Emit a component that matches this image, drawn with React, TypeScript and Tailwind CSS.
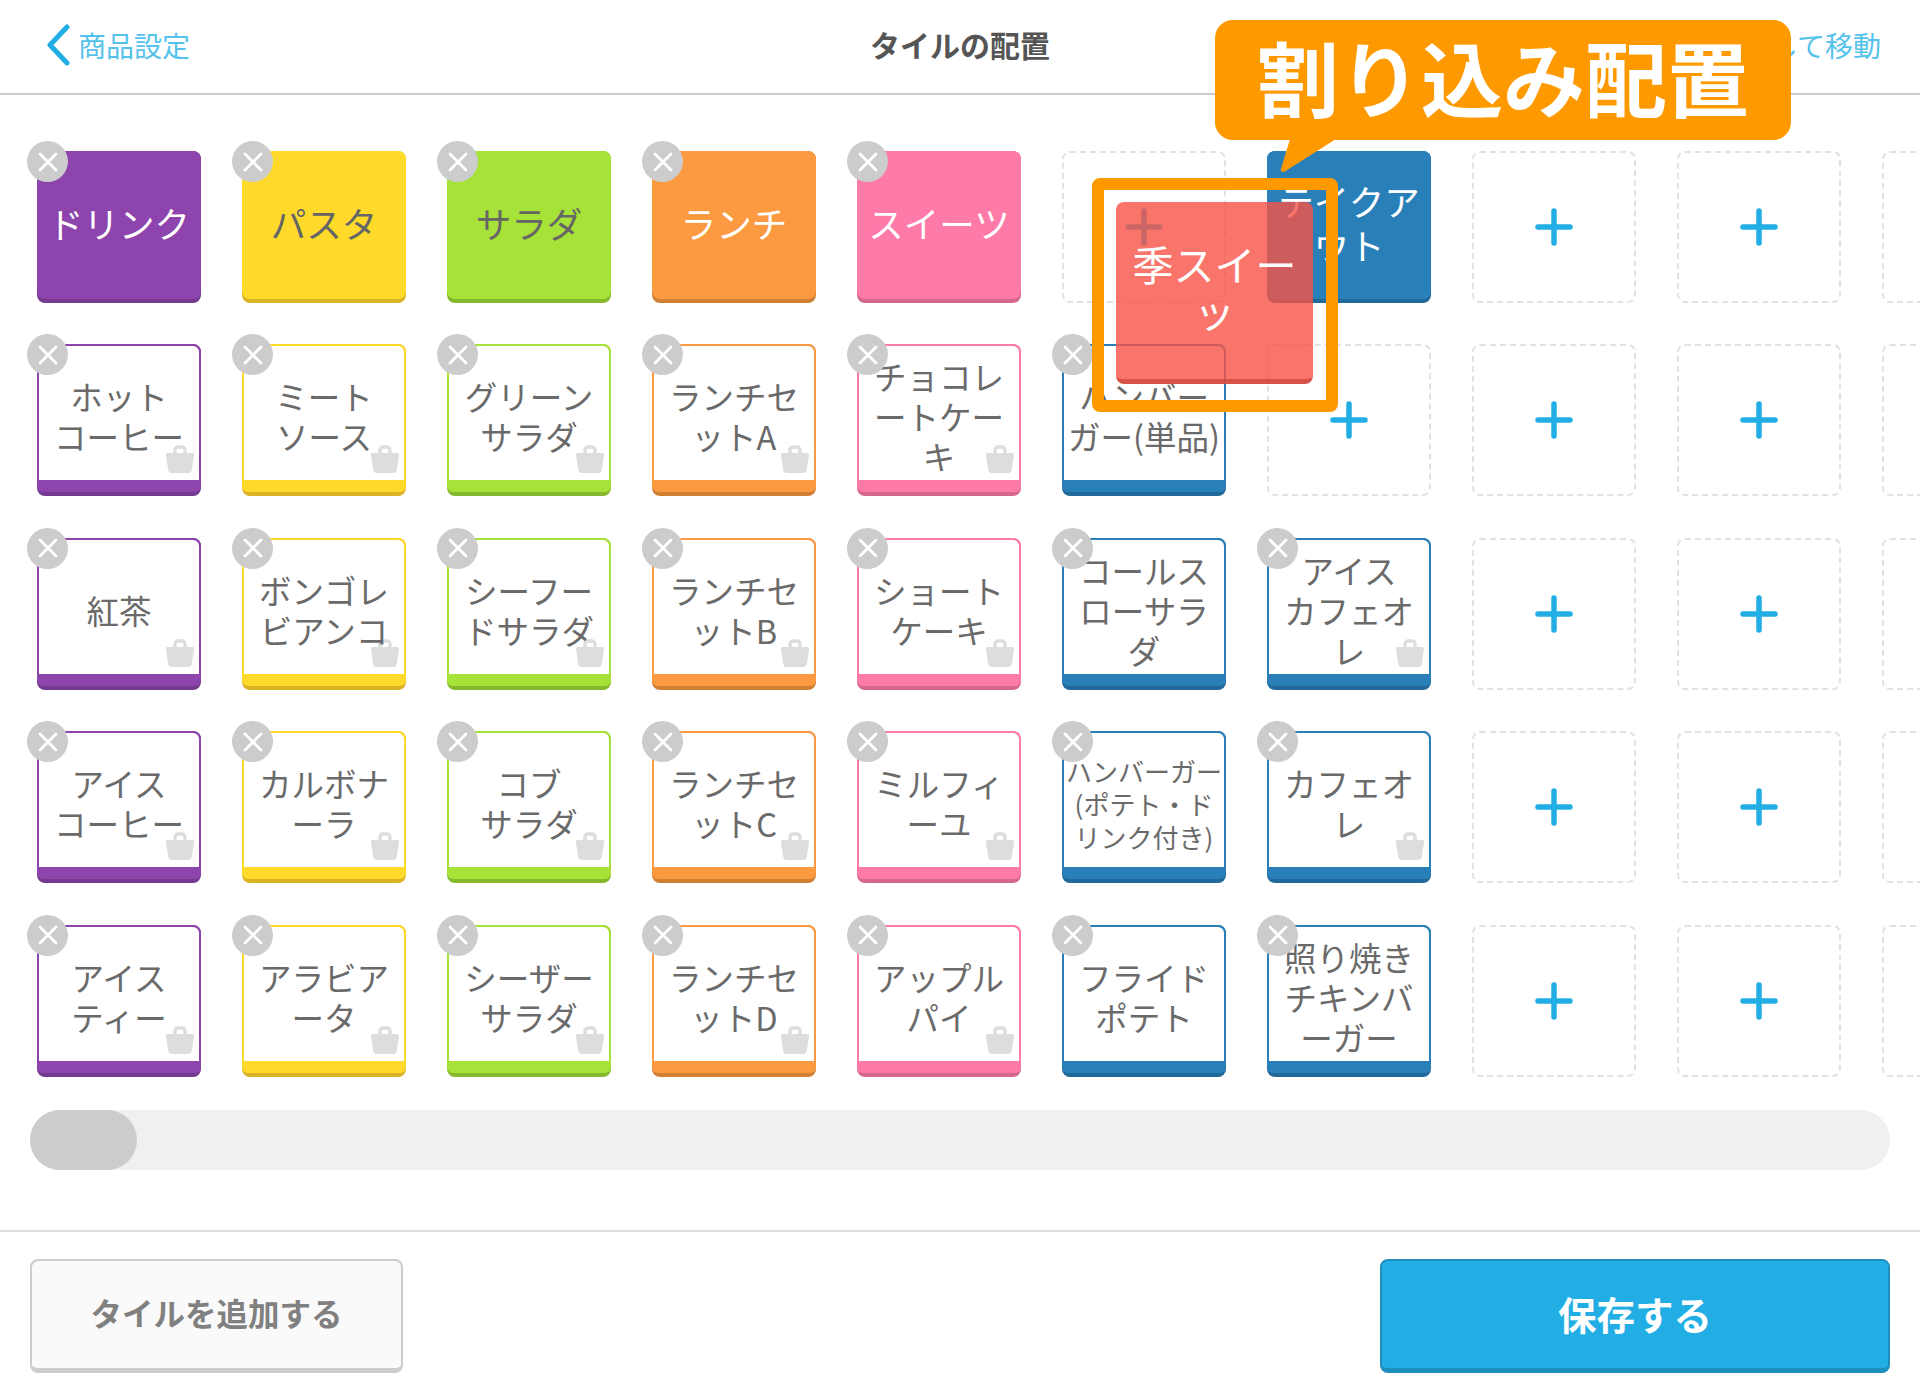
import React from "react";

const FONT = { fontFamily: '"Noto Sans CJK JP", "Noto Sans", sans-serif' };

const PALETTE = {
  purple: { bg: "bg-[#8e44ad]", dark: "bg-[#733a8f]", border: "border-[#8e44ad]", label: "text-white" },
  yellow: { bg: "bg-[#ffda2b]", dark: "bg-[#d9b324]", border: "border-[#ffda2b]", label: "text-[#666666]" },
  green: { bg: "bg-[#a6e237]", dark: "bg-[#85b82d]", border: "border-[#a6e237]", label: "text-[#666666]" },
  orange: { bg: "bg-[#fb9a40]", dark: "bg-[#d17f33]", border: "border-[#fb9a40]", label: "text-white" },
  pink: { bg: "bg-[#fe7aa8]", dark: "bg-[#d5668c]", border: "border-[#fe7aa8]", label: "text-white" },
  blue: { bg: "bg-[#2980b9]", dark: "bg-[#21699a]", border: "border-[#2980b9]", label: "text-white" },
};

type ColorName = keyof typeof PALETTE;

interface TileData {
  lines: string[];
  color: ColorName;
  solid?: boolean;
  noClose?: boolean;
  noBag?: boolean;
  small?: boolean;
}

const item = (color: ColorName, text: string, noBag = false, small = false): TileData => ({
  lines: text.split("/"),
  color,
  noBag,
  small,
});

const cat = (color: ColorName, text: string, noClose = false): TileData => ({
  lines: text.split("/"),
  color,
  solid: true,
  noClose,
});

const ROWS: (TileData | null)[][] = [
  [cat("purple", "ドリンク"), cat("yellow", "パスタ"), cat("green", "サラダ"), cat("orange", "ランチ"), cat("pink", "スイーツ"), null, cat("blue", "テイクア/ウト", true), null, null, null],
  [item("purple", "ホット/コーヒー"), item("yellow", "ミート/ソース"), item("green", "グリーン/サラダ"), item("orange", "ランチセ/ットA"), item("pink", "チョコレ/ートケー/キ"), item("blue", "ハンバー/ガー(単品)", true), null, null, null, null],
  [item("purple", "紅茶"), item("yellow", "ボンゴレ/ビアンコ"), item("green", "シーフー/ドサラダ"), item("orange", "ランチセ/ットB"), item("pink", "ショート/ケーキ"), item("blue", "コールス/ローサラ/ダ", true), item("blue", "アイス/カフェオ/レ"), null, null, null],
  [item("purple", "アイス/コーヒー"), item("yellow", "カルボナ/ーラ"), item("green", "コブ/サラダ"), item("orange", "ランチセ/ットC"), item("pink", "ミルフィ/ーユ"), item("blue", "ハンバーガー/(ポテト・ド/リンク付き)", true, true), item("blue", "カフェオ/レ"), null, null, null],
  [item("purple", "アイス/ティー"), item("yellow", "アラビア/ータ"), item("green", "シーザー/サラダ"), item("orange", "ランチセ/ットD"), item("pink", "アップル/パイ"), item("blue", "フライド/ポテト", true), item("blue", "照り焼き/チキンバ/ーガー", true), null, null, null],
];

function CloseBadge() {
  return (
    <div className="absolute -left-[10px] -top-[10px] z-10 flex h-[41px] w-[41px] items-center justify-center rounded-full bg-[#cccccc]">
      <svg width="20" height="20" viewBox="0 0 20 20" fill="none" stroke="white" strokeWidth="2.8" strokeLinecap="round">
        <path d="M2 2 18 18M18 2 2 18" />
      </svg>
    </div>
  );
}

function BagIcon() {
  return (
    <svg className="absolute bottom-[7px] right-[5px]" width="28" height="28" viewBox="0 0 28 28" fill="none">
      <path d="M9 10V5a3 3 0 0 1 3-3h4a3 3 0 0 1 3 3v5" stroke="#dddddd" strokeWidth="3.4" />
      <path
        d="M2 8h24a2 2 0 0 1 2 2.4l-2.2 14.4A3.5 3.5 0 0 1 22.4 28H5.6a3.5 3.5 0 0 1-3.4-3.2L0 10.4A2 2 0 0 1 2 8Z"
        fill="#dddddd"
      />
    </svg>
  );
}

function PlusIcon({ color = "#22aee4" }: { color?: string }) {
  return (
    <svg width="38" height="38" viewBox="0 0 38 38" fill="none" stroke={color} strokeWidth="5.5" strokeLinecap="round">
      <path d="M19 3V35M3 19H35" />
    </svg>
  );
}

function EmptySlot() {
  return (
    <div className="flex h-[152px] items-center justify-center rounded-lg border-2 border-dashed border-[#e2e2e2]">
      <PlusIcon />
    </div>
  );
}

function Tile({ tile }: { tile: TileData }) {
  const c = PALETTE[tile.color];
  return (
    <div className={`relative h-[152px] rounded-lg pb-[4px] ${c.dark}`}>
      {tile.solid ? (
        <div className={`flex h-full flex-col items-center justify-center rounded-lg pb-[5px] text-[35.5px] leading-[44px] ${c.bg} ${c.label}`}>
          {tile.lines.map((l) => (
            <span key={l} className="whitespace-nowrap">{l}</span>
          ))}
        </div>
      ) : (
        <div className={`relative flex h-full flex-col items-center justify-center rounded-t-lg rounded-b-md border-2 border-b-[12px] bg-white pt-[6px] text-[#6a6a6a] ${c.border} ${tile.small ? "text-[26px] leading-[33px]" : "text-[32.5px] leading-[40px]"}`}>
          {tile.lines.map((l) => (
            <span key={l} className="relative z-[1] whitespace-nowrap">{l}</span>
          ))}
          {!tile.noBag && <BagIcon />}
        </div>
      )}
      {!tile.noClose && <CloseBadge />}
    </div>
  );
}

export default function App() {
  return (
    <div style={FONT} className="relative flex h-[1400px] w-[1920px] flex-col overflow-hidden bg-white">
      <header className="relative flex h-[95px] shrink-0 items-center justify-between border-b-2 border-[#cccccc] pb-[4px] pl-[46px] pr-[39px]">
        <div className="flex items-center gap-[8px]">
          <svg width="24" height="42" viewBox="0 0 24 42" fill="none" stroke="#22aee4" strokeWidth="5" strokeLinecap="round" strokeLinejoin="round">
            <path d="M21 3 4 21 21 39" />
          </svg>
          <span className="text-[28px] text-[#55c2ec]">商品設定</span>
        </div>
        <span className="absolute left-0 right-0 text-center text-[30px] font-bold text-[#555555]">タイルの配置</span>
        <span className="text-[28px] text-[#55c2ec]">長押しして移動</span>
      </header>

      <main className="pl-[37px] pt-[56px]">
        <div className="grid w-max grid-cols-[repeat(10,164px)] gap-x-[41px] gap-y-[41.4px]">
          {ROWS.flatMap((row, r) =>
            row.map((tile, i) => (tile ? <Tile key={`${r}-${i}`} tile={tile} /> : <EmptySlot key={`${r}-${i}`} />))
          )}
        </div>
      </main>

      <div className="ml-[30px] mt-[33px] h-[60px] w-[1860px] shrink-0 rounded-full bg-[#f0f0f0]">
        <div className="h-full w-[107px] rounded-full bg-[#cccccc]" />
      </div>

      <footer className="mt-[60px] flex h-[170px] shrink-0 items-start justify-between border-t-2 border-[#dddddd] px-[30px] pt-[27px]">
        <button className="flex h-[114px] w-[373px] items-center justify-center rounded-lg border-2 border-b-[5px] border-[#cccccc] bg-[#fafafa] pb-[2px] text-[31.5px] font-bold text-[#808080]">
          タイルを追加する
        </button>
        <button className="flex h-[114px] w-[510px] items-center justify-center rounded-lg border-2 border-b-[5px] border-[#1e8fbd] bg-[#22aee4] pb-[1px] text-[38.5px] font-bold text-white">
          保存する
        </button>
      </footer>

      {/* dragged tile */}
      <div className="absolute left-[1116px] top-[202px] z-20 flex h-[182px] w-[197px] flex-col items-center justify-center rounded-lg border-b-[5px] border-[#c8463c]/70 bg-[#f75246]/80 pb-[7px] text-[41px] leading-[47px] text-white">
        <span className="whitespace-nowrap">季スイー</span>
        <span>ッ</span>
      </div>

      {/* annotation */}
      <div className="absolute left-[1092px] top-[178px] z-30 h-[234px] w-[246px] rounded-lg border-[12px] border-[#ff9900]" />
      <div className="absolute left-[1215px] top-[20px] z-30 flex h-[120px] w-[576px] items-center justify-center rounded-[18px] bg-[#ff9900] pb-[9px] text-[82px] font-bold text-white">
        <span className="whitespace-nowrap">割り込み配置</span>
        <svg className="absolute left-[65px] top-[119px]" width="58" height="34" viewBox="0 0 58 34">
          <path d="M10 0H56L4 33Q0 33 1 30Z" fill="#ff9900" />
        </svg>
      </div>
    </div>
  );
}
